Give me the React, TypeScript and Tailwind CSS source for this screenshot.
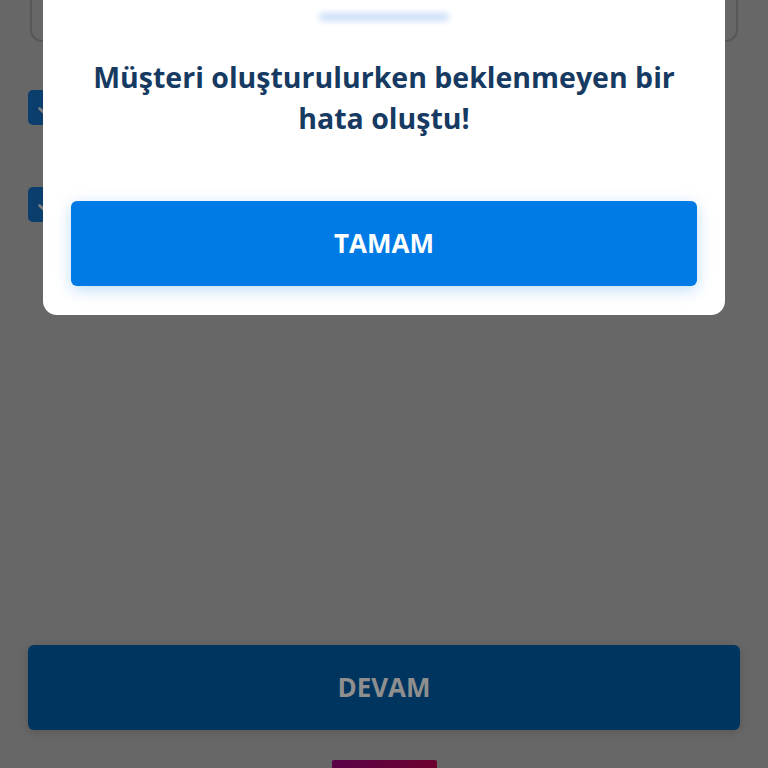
export default function App() {
  return (
    <div
      className="relative w-full h-[768px] overflow-hidden bg-[#676767]"
      style={{ fontFamily: "'Open Sans', 'Noto Sans', sans-serif" }}
    >
      {/* Page behind the dialog, dimmed */}
      <div className="flex flex-col h-full px-[28px]">
        <div className="mx-[2px] -mt-[20px] h-[62px] rounded-b-[12px] border-2 border-[#575757]" />

        <div className="mt-[48px] flex flex-col gap-[62px]">
          {[0, 1].map((i) => (
            <div
              key={i}
              className="w-[35px] h-[35px] rounded-[5px] bg-[#0b3e6c] flex items-center justify-center"
            >
              <svg width="22" height="22" viewBox="0 0 24 24" fill="none">
                <path
                  d="M5 12.5l4.5 4.5L19 7"
                  stroke="#7d7d7d"
                  strokeWidth="3"
                  strokeLinecap="round"
                  strokeLinejoin="round"
                />
              </svg>
            </div>
          ))}
        </div>

        <div className="flex-1" />

        <button className="w-full h-[85px] rounded-[6px] bg-[#00355f] text-[#8f8f8f] text-[26px] font-bold shadow-[0_2px_10px_rgba(0,0,0,0.15)]">
          DEVAM
        </button>

        <div className="mt-[30px] mx-auto w-[105px] h-[8px] rounded-t-[2px] bg-gradient-to-r from-[#5a0046] to-[#6c002e]" />
      </div>

      {/* Dialog */}
      <div className="absolute left-[43px] right-[43px] top-0 h-[315px] bg-white rounded-b-[14px] flex flex-col items-center px-[28px]">
        <div className="mt-[13px] w-[130px] h-[8px] rounded-full bg-[#c9def7] blur-[3px]" />

        <h2 className="mt-[36px] text-center text-[28.5px] leading-[41px] font-bold text-[#163a61]">
          Müşteri oluşturulurken beklenmeyen bir hata oluştu!
        </h2>

        <button className="mt-[62px] w-full h-[85px] rounded-[6px] bg-[#007be5] text-white text-[26px] font-bold shadow-[0_4px_16px_rgba(0,123,229,0.25)]">
          TAMAM
        </button>
      </div>
    </div>
  );
}
